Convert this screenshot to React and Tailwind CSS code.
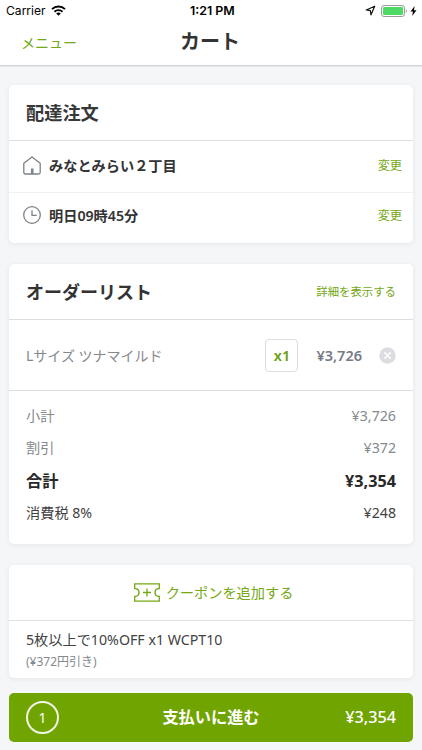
import React from "react";

function StatusBar() {
  return (
    <div className="relative flex h-[22px] items-center justify-between pl-[6px] pr-[5px] font-['Inter','Liberation_Sans',sans-serif] text-[12px] leading-none text-black">
      <div className="flex items-center gap-[5px]">
        <span className="text-[12.1px]">Carrier</span>
        <svg width="15" height="11" viewBox="0 0 15 11" className="-mt-px" fill="none" stroke="#000" strokeWidth="1.9">
          <path d="M1 4.2a9.2 9.2 0 0 1 13 0" />
          <path d="M3.5 6.8a5.7 5.7 0 0 1 8 0" />
          <path d="M7.5 10.8 5.2 8.5a3.3 3.3 0 0 1 4.6 0Z" fill="#000" stroke="none" />
        </svg>
      </div>
      <span className="absolute left-[190px] whitespace-nowrap text-[12.4px] font-semibold">1:21 PM</span>
      <div className="-mt-px flex items-center">
        <svg width="11" height="11" viewBox="0 0 11 11" fill="none" stroke="#111" strokeWidth="1.2" strokeLinejoin="round">
          <path d="M9.7 1.2 1.2 5 5.3 5.6 6 9.8Z" />
        </svg>
        <svg width="26" height="12" viewBox="0 0 26 12" className="ml-[5px]">
          <rect x=".5" y=".5" width="23" height="11" rx="2.6" fill="none" stroke="#999" />
          <rect x="2" y="2" width="20" height="8" rx="1.3" fill="#4cd964" />
          <path d="M24.8 4.2v3.6c.7-.3 1.1-1 1.1-1.8s-.4-1.5-1.1-1.8Z" fill="#999" />
        </svg>
        <svg width="7" height="10" viewBox="0 0 6 10" className="ml-[3px]">
          <path d="M4.2 0 0 5.6h2.500L1.600 10 6 4.200H3.400Z" fill="#000" />
        </svg>
      </div>
    </div>
  );
}

function HomeIcon() {
  return (
    <svg width="18" height="19" viewBox="0 0 18 19" className="-mt-[2px]" fill="none" stroke="#7b8289" strokeWidth="1.3" strokeLinejoin="round">
      <path d="M.8 7.3 9 1l8.2 6.3v9.2a1.5 1.5 0 0 1-1.5 1.5H2.3A1.5 1.5 0 0 1 .8 16.5Z" />
      <path d="M8 12.5h2.5V18H8Z" fill="#7b8289" stroke="none" />
    </svg>
  );
}

function ClockIcon() {
  return (
    <svg width="18" height="18" viewBox="0 0 18 18" className="-mt-[2px]" fill="none" stroke="#7b8289" strokeWidth="1.3">
      <circle cx="9" cy="9" r="8.3" />
      <path d="M9 4.3V9.3h4.8" />
    </svg>
  );
}

function CouponIcon() {
  return (
    <svg width="26" height="19" viewBox="0 0 26 19" className="-mt-px" fill="none" stroke="#74a814" strokeWidth="1.3">
      <path d="M.7.8h24.6v4.9h-1.3a3.9 3.9 0 0 0 0 7.6h1.3v4.9H.7v-4.9h1.3a3.9 3.9 0 0 0 0-7.6H.7Z" />
      <path d="M13 5.500v8M9 9.500h8" />
    </svg>
  );
}

function Card({ children, className }) {
  return (
    <section className={"overflow-hidden rounded-[5px] bg-white shadow-[0_1px_5px_rgba(60,70,80,0.09)] " + className}>
      {children}
    </section>
  );
}

function DeliveryRow({ icon, label, className }) {
  return (
    <div className={"flex items-center pl-[14px] pr-[11px] " + className}>
      {icon}
      <span className="ml-[8px] flex-1 text-[14.2px] font-semibold text-[#333]">{label}</span>
      <button className="text-[12.2px] text-[#74a814]">変更</button>
    </div>
  );
}

const lines = [
  ["小計", "¥3,726", "text-[14.2px] text-[#84898e]"],
  ["割引", "¥372", "text-[14.2px] text-[#84898e]"],
  ["合計", "¥3,354", "text-[16.2px] font-bold text-[#282828]"],
  ["消費税 8%", "¥248", "text-[14.2px] text-[#424242]"],
];

export default function App() {
  return (
    <div className="flex h-[750px] w-[422px] flex-col overflow-hidden bg-[#f5f6f8] font-['Noto_Sans','Noto_Sans_CJK_JP',sans-serif] leading-none">
      <header className="h-[66px] shrink-0 border-b border-[#d2d3d6] bg-white shadow-[0_1px_1px_rgba(0,0,0,0.05)]">
        <StatusBar />
        <div className="grid h-[40px] grid-cols-3 items-center pl-[21px] pr-[23px]">
          <button className="pt-[2px] text-left text-[14px] text-[#74a814]">メニュー</button>
          <h1 className="text-center text-[20px] font-semibold text-[#333]">カート</h1>
        </div>
      </header>

      <main className="flex flex-1 flex-col pl-[9px] pr-[9px] pt-[19px]">
        <Card className="h-[158px] shrink-0">
          <h2 className="flex h-[56px] items-center border-b border-[#dddee0] pl-[17px] pt-px text-[18.2px] font-semibold text-[#383838]">配達注文</h2>
          <DeliveryRow icon={<HomeIcon />} label="みなとみらい２丁目" className="h-[52px] border-b border-[#eff0f2]" />
          <DeliveryRow icon={<ClockIcon />} label="明日09時45分" className="h-[46px]" />
        </Card>

        <Card className="mt-[21px] h-[280px] shrink-0">
          <div className="flex h-[56px] items-center justify-between border-b border-[#dddee3] px-[17px]">
            <h2 className="text-[18px] font-bold text-[#333]">オーダーリスト</h2>
            <button className="pt-px text-[11.4px] text-[#74a814]">詳細を表示する</button>
          </div>
          <div className="flex h-[71px] items-center border-b border-[#dddee3] px-[17px]">
            <span className="flex-1 pt-[2px] text-[14px] text-[#84898e]">Lサイズ ツナマイルド</span>
            <button className="flex size-[33px] items-center justify-center rounded-[4px] border border-[#dcdce2] pt-px text-[14.5px] font-semibold text-[#669e0c]">x1</button>
            <span className="ml-[18px] pt-px text-[14.5px] font-semibold text-[#747b83]">¥3,726</span>
            <svg width="17" height="17" viewBox="0 0 17 17" className="ml-[17px]">
              <circle cx="8.5" cy="8.5" r="8.2" fill="#dcdde1" />
              <path d="m5.3 5.3 6.4 6.4m0-6.4-6.4 6.4" stroke="#fff" strokeWidth="1.6" />
            </svg>
          </div>
          <div className="flex flex-col px-[17px] pt-[8.6px]">
            {lines.map(([label, price, style]) => (
              <div key={label} className={"flex h-[32.5px] items-center justify-between " + style}>
                <span>{label}</span>
                <span>{price}</span>
              </div>
            ))}
          </div>
        </Card>

        <Card className="mt-[21px] h-[113px] shrink-0">
          <button className="flex h-[56px] w-full items-center justify-center gap-[6px] border-b border-[#e0e1e5] pl-[5px] pt-px text-[14.2px] text-[#74a814]">
            <CouponIcon />
            <span className="pt-px">クーポンを追加する</span>
          </button>
          <div className="flex flex-col gap-[9px] pl-[17px] pt-[12px]">
            <span className="text-[14.2px] text-[#424242]">5枚以上で10%OFF x1 WCPT10</span>
            <span className="text-[12px] text-[#84898e]">(¥372円引き)</span>
          </div>
        </Card>

        <button className="mt-[15px] grid h-[49px] shrink-0 grid-cols-3 items-center rounded-[5px] bg-[#70a401] px-[17px] text-white">
          <span className="flex size-[33px] items-center justify-center rounded-full border-2 border-white/90 text-[14px]">1</span>
          <span className="whitespace-nowrap text-center text-[16.2px] font-semibold">支払いに進む</span>
          <span className="text-right text-[16.2px] font-medium">¥3,354</span>
        </button>
      </main>
    </div>
  );
}
